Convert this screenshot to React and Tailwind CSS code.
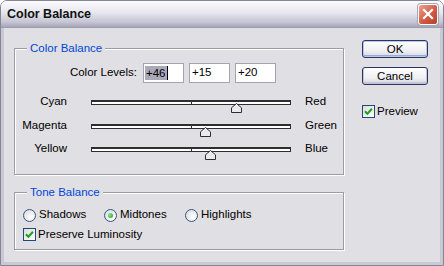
import React from "react";

const font = "font-['Liberation_Sans',Arial,sans-serif]";

function Check({ checked = true }) {
  return (
    <span className="flex items-center justify-center w-[13px] h-[13px] border border-[#1f4a78] bg-[linear-gradient(135deg,#dcdcd8,#ffffff)] shrink-0">
      {checked && (
        <svg width="9" height="9" viewBox="0 0 9 9">
          <path d="M1 4.2 L3.4 6.8 L8 1.8" fill="none" stroke="#21a121" strokeWidth="2" />
        </svg>
      )}
    </span>
  );
}

function Radio({ checked, label }) {
  return (
    <label className="flex items-center w-[81px] gap-[3px]">
      <span className="flex items-center justify-center w-[13px] h-[13px] rounded-full border border-[#35587e] bg-[radial-gradient(circle_at_65%_65%,#ffffff,#d6d6dc)] shrink-0">
        {checked && (
          <span className="w-[5px] h-[5px] rounded-full bg-[radial-gradient(circle_at_35%_35%,#8ee68e,#1f9a1f)]" />
        )}
      </span>
      <span>{label}</span>
    </label>
  );
}

function Slider({ left, right, value }) {
  return (
    <div className="flex items-center h-[23.5px]">
      <span className="w-[52px] text-right">{left}</span>
      <div className="relative ml-[24px] mt-[2px] w-[200px] h-[5px] border-t-2 border-x border-b border-[#2e2e2e] bg-white">
        <div className="absolute left-[99px] top-0 bottom-0 w-px bg-[#2e2e2e]" />
        <svg
          className="absolute top-[1px]"
          style={{ left: 93 + value }}
          width="11"
          height="10"
          viewBox="0 0 11 10"
        >
          <path d="M0.5 9.5 V4.8 L5.5 0.5 L10.5 4.8 V9.5 Z" fill="#ebebee" stroke="#2e2e2e" />
        </svg>
      </div>
      <span className="ml-[14px]">{right}</span>
    </div>
  );
}

function Group({ title, children, className = "" }) {
  return (
    <fieldset
      className={`w-[330px] border border-[#9c9ca4] shadow-[1px_1px_0_#fff,inset_1px_1px_0_#fff] ${className}`}
    >
      <legend className="ml-[12px] px-[3px] leading-[14px] text-[#0046d5] bg-[#e0dfe3]">{title}</legend>
      {children}
    </fieldset>
  );
}

function XpButton({ children, focused }) {
  return (
    <button
      className={`w-[66px] h-[18px] rounded-[3px] border border-[#2a3566] bg-[linear-gradient(#ffffff,#f0f0f4_60%,#d6d6e0)] leading-[16px] text-black ${
        focused ? "shadow-[inset_0_0_0_1px_#b8c8e8,inset_0_-1px_0_1px_#9aaad0]" : "shadow-[inset_0_-1px_0_1px_#c4c4d4]"
      }`}
    >
      {children}
    </button>
  );
}

export default function App() {
  return (
    <div className={`w-[444px] h-[266px] flex flex-col bg-white ${font} text-[11.5px] text-black`}>
      <div className="flex flex-col flex-1 rounded-t-[7px] border border-[#858598] overflow-hidden">
        {/* title bar */}
        <div className="flex items-center justify-between h-[27px] pl-[6px] pr-[5px] bg-[linear-gradient(#fbfbfd,#e6e6ee_45%,#c6c6d4_80%,#a6a6b8)] border-b border-[#9c9cb0]">
          <span className="font-bold text-[12.5px] text-[#111]">Color Balance</span>
          <span className="flex items-center justify-center w-[20px] h-[21px] rounded-[3px] border border-white bg-[linear-gradient(135deg,#eea28e,#d25a44_55%,#b8402c)] shadow-[0_0_0_1px_#a7a7b5]">
            <svg width="12" height="12" viewBox="0 0 12 12">
              <path d="M2 2 L10 10 M10 2 L2 10" stroke="#fff" strokeWidth="2.2" strokeLinecap="square" />
            </svg>
          </span>
        </div>

        {/* body */}
        <div className="flex flex-1 items-start gap-[18px] bg-[#e0dfe3] border-x-[3px] border-b-[3px] border-[#c9c9d4] pl-[10px] pt-[12px]">
          <div className="flex flex-col mt-[1px]">
            <Group title="Color Balance">
              <div className="flex flex-col h-[119px] pt-[8px]">
                <div className="flex items-center h-[20px]">
                  <span className="w-[122px] text-right">Color Levels:</span>
                  <div className="flex gap-[5px] ml-[6px]">
                    <div className="flex items-center w-[41px] h-[20px] border border-[#a4a4b0] bg-white pl-[1px]">
                      <span className="bg-[#a9a9ba] leading-[14px] px-px">+46</span>
                      <span className="w-px h-[14px] bg-black" />
                    </div>
                    <div className="flex items-center w-[41px] h-[20px] border border-[#a4a4b0] bg-white pl-[2px]">+15</div>
                    <div className="flex items-center w-[41px] h-[20px] border border-[#a4a4b0] bg-white pl-[2px]">+20</div>
                  </div>
                </div>
                <div className="flex flex-col mt-[7px]">
                  <Slider left="Cyan" right="Red" value={46} />
                  <Slider left="Magenta" right="Green" value={15} />
                  <Slider left="Yellow" right="Blue" value={20} />
                </div>
              </div>
            </Group>

            <Group title="Tone Balance" className="mt-[10px]">
              <div className="flex flex-col h-[50px] pt-[7px] pl-[8px]">
                <div className="flex items-center h-[18px]">
                  <Radio label="Shadows" />
                  <Radio label="Midtones" checked />
                  <Radio label="Highlights" />
                </div>
                <label className="flex items-center h-[21px] gap-[2px]">
                  <Check />
                  <span>Preserve Luminosity</span>
                </label>
              </div>
            </Group>
          </div>

          <div className="flex flex-col">
            <XpButton focused>OK</XpButton>
            <div className="mt-[9px]">
              <XpButton>Cancel</XpButton>
            </div>
            <label className="flex items-center gap-[2px] mt-[18px]">
              <Check />
              <span>Preview</span>
            </label>
          </div>
        </div>
      </div>
    </div>
  );
}
